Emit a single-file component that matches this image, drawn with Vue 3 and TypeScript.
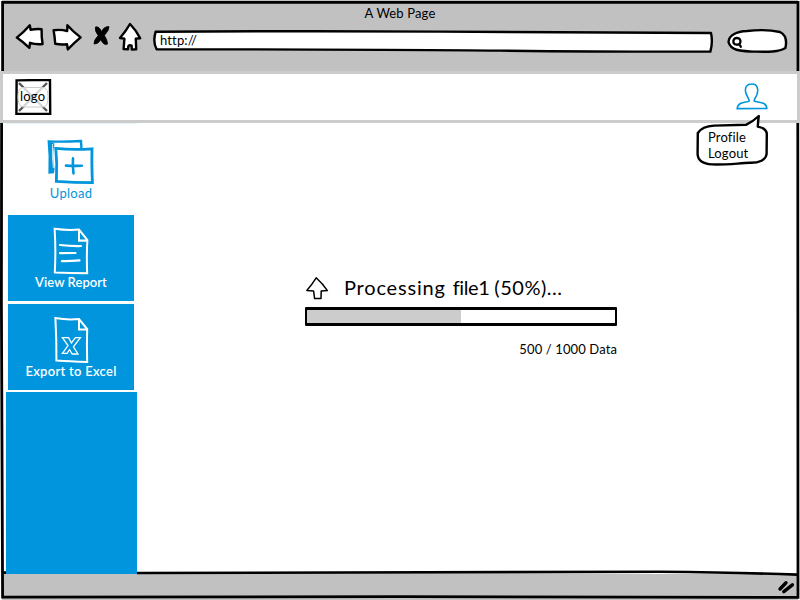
<script setup lang="ts">
interface NavItem {
  id: 'upload' | 'report' | 'excel'
  label: string
  active: boolean
}

const navItems: NavItem[] = [
  { id: 'upload', label: 'Upload', active: true },
  { id: 'report', label: 'View Report', active: false },
  { id: 'excel', label: 'Export to Excel', active: false },
]

const done = 500
const total = 1000
const percent = (done / total) * 100
</script>

<template>
  <div class="window">
    <header class="chrome">
      <div class="title"><span>A Web Page</span></div>
      <div class="toolbar">
        <svg class="ink tool-back" viewBox="14 22 31 30" width="31" height="30">
          <path d="M16.8 37.6 Q24 32 29.8 25.3 L30.6 29.8 Q37 28.6 41.6 29.3 Q41.4 37 42.6 44 Q36 44.8 30 42.8 L29.4 47.8 Q23 42 16.8 37.6Z" />
        </svg>
        <svg class="ink tool-forward" viewBox="51 22 32 30" width="32" height="30">
          <path d="M53.6 30.2 Q61 29.2 67.2 31 L67.4 25.2 Q73 31.5 80.6 37.4 Q74 43 67.8 49.4 L67 44.2 Q61 44.8 55.2 43.8 Q54.8 37 53.6 30.2Z" />
        </svg>
        <svg class="tool-stop" viewBox="92 24 20 24" width="20" height="24">
          <path d="M95.4 27 Q99 26 101.6 31.6 Q104 26.4 109 26.6 Q109.4 30 104.4 35.4 Q107.4 40 107.6 44 Q104 46 100.8 39.8 Q97.4 44.8 94 44 Q93.6 40.4 98.2 35.6 Q94.6 31 95.4 27Z" fill="#000" stroke="#000" stroke-width=".8" stroke-linejoin="round" />
        </svg>
        <svg class="ink tool-home" viewBox="117 21 26 31" width="26" height="31">
          <path d="M130 24 Q136 30 140.2 38.2 L135.8 38.6 L136.2 49.2 L131.8 49.6 L131.6 45.6 Q129.6 44.6 128.4 46 L128 49.4 L123.6 49 L124.4 38.6 L120 38 Q126 31 130 24Z" />
        </svg>
        <div class="address">
          <svg class="ink" viewBox="152 29 562 24" width="562" height="24">
            <path d="M155.6 31.8 Q300 30.7 440 31.6 T711 33 Q713 42 710.4 51.6 Q600 51.8 500 50.6 T156.6 49.2 Q152.6 42 155.6 31.8Z" />
          </svg>
          <span>http://</span>
        </div>
        <svg class="ink tool-search" viewBox="726 27 63 28" width="63" height="28">
          <path d="M728.5 42 C729 35 737 31.5 747 31 C759 29.6 771 30 780 32 C786 35 787 41 785.4 48 C778 52.6 765 51.8 753 51.6 C743 51 731 51.5 728.5 42Z" />
          <path class="fine" d="M736.4 38 C740 37.8 741 40 740.2 43 C739 45.4 734.6 45.2 733.6 43 C732.8 40 734.4 38.2 736.4 38 M739.4 44 L740.8 46.8" />
        </svg>
      </div>
    </header>

    <div class="app-bar">
      <div class="logo">
        <svg viewBox="15 79 37 36" width="37" height="36">
          <path d="M16.6 80.4 L50 79.9 L50.2 113.8 L16.4 114Z" fill="#fff" stroke="#000" stroke-width="2.4" />
          <path d="M19 83 L47 111 M47 83 L19 111" stroke="#555" stroke-width="2.4" />
          <path d="M22 87.5 H44 Q48 89 48 97 Q48 106 44 107 H23 Q18 106 18 97 Q18 89 22 87.5Z" fill="#fff" fill-opacity=".75" stroke="#ccc" />
        </svg>
        <span>logo</span>
      </div>
      <svg class="user" viewBox="735 81 34 30" width="34" height="30">
        <path d="M751.5 84 C758 83.5 758.6 90 756.8 95 C755.5 98 754 99 754.2 101 C758 102.6 766.6 101.5 766.8 108.4 L737.2 108.6 C738 101 747 102.8 749.2 101 C749 98 746.4 96 745.6 92 C744.8 87 747 84 751.5 84Z" fill="#fff" stroke="#0095dc" stroke-width="1.6" />
      </svg>
    </div>

    <div class="body">
      <nav class="sidebar">
        <div v-for="item in navItems" :key="item.id" class="nav-item" :class="{ active: item.active }">
          <svg v-if="item.id === 'upload'" viewBox="46 138 50 48" width="50" height="48">
            <path d="M54 172 L49.6 172.4 Q50.4 156 48.8 141.4 Q64 142 81 141 L81.4 148" fill="none" stroke="#0095dc" stroke-width="2.4" />
            <path d="M50 142 L54.6 143.4 Q51.6 156 54.6 169 L54 173 L49.6 172Z" fill="#0095dc" />
            <path d="M52.6 144 Q51.8 157 53.4 168 M54 143.8 H78" fill="none" stroke="#fff" stroke-width=".8" />
            <path d="M55.8 148.4 Q73 150 92 148.8 Q91.6 164 92.4 182.6 Q74 182.6 56.4 181.4 Q57.3 164 55.8 148.4Z" fill="#fff" stroke="#0095dc" stroke-width="2.8" />
            <path d="M73 158.4 Q72.5 166 73.5 173.4 M66 165.6 Q74 166 81.8 165.8" fill="none" stroke="#0095dc" stroke-width="2.6" stroke-linecap="round" />
          </svg>
          <svg v-else-if="item.id === 'report'" class="paper" viewBox="46 227 50 48" width="50" height="48">
            <path d="M54.6 228.8 Q67 230.6 79 229.6 L87.4 240 Q86.4 256 87.2 273.2 Q70 273 54.8 272.4 Q56 250 54.6 228.8Z M79 229.8 L79 240.6 L87 240.4" />
            <path d="M60 245 Q70 246.2 81 246 M60 253.2 L75.5 253 M62 261.2 Q71 261.3 79.5 260.4" stroke-width="2.2" stroke-linecap="round" />
          </svg>
          <svg v-else class="paper" viewBox="46 316 50 48" width="50" height="48">
            <path d="M55.4 318 Q67 320.2 79 319 L87.2 329 Q86.6 345 87.2 362 Q70 361.6 56.4 360.6 Q56.6 340 55.4 318Z M79 319 L79 329.4 L87.4 329.4" />
            <path d="M62.4 337.6 H68.6 L71.4 343 L75.4 337.6 H80.4 L73.4 346.8 L78 354 H72.2 L69.6 349.6 L67 353.4 H62.4 L68 345.6Z" stroke-width="1.3" />
          </svg>
          <span :class="'label-' + item.id">{{ item.label }}</span>
        </div>
        <div class="sidebar-fill"></div>
      </nav>

      <main class="content">
        <section class="progress">
          <div class="heading">
            <svg viewBox="305 276 24 24" width="24" height="24">
              <path d="M316.2 277.8 Q323 284 327.4 290.6 L321.2 291 L321 298.4 L314.6 298.6 L313.6 291 L306.8 290.4 Q312 284.5 316.2 277.8Z" fill="#fff" stroke="#000" stroke-width="1.5" stroke-linejoin="round" />
            </svg>
            <h1><span class="verb">Processing</span><span class="file">file1</span><span>({{ percent }}%)...</span></h1>
          </div>
          <div class="bar"><div class="bar-fill" :style="{ width: percent + '%' }"></div></div>
          <p class="count">{{ done }} / {{ total }} Data</p>
        </section>
      </main>
    </div>

    <footer class="status"></footer>

    <svg class="frame" viewBox="0 0 800 600" width="800" height="600">
      <path d="M2.6 71 V2.3 H798 V71" stroke-width="2.8" />
      <path d="M1.6 123 L1.4 300 L2.6 597.2 L400 596.6 L798 597.4 L797.8 123" stroke-width="2.8" />
      <path d="M3 572.6 H6 M137 573 Q400 571.4 660 571.8 Q740 572.6 797 574.6" stroke-width="2.6" />
      <path d="M780 589 L786 582.8 M783.8 591.6 L792.4 584.8" stroke-width="3.4" stroke-linecap="round" />
    </svg>

    <div class="menu">
      <svg class="ink" viewBox="695 113 74 54" width="74" height="54">
        <path d="M697.8 133 C701 128 707 126 714 125.6 L746 124.8 Q753 121.5 758.8 116 Q758 121 757.8 126.6 C763 127.6 766.6 130 766.8 134 L766.6 154 C766 160 759 163 750 162.8 C737 163.4 724 165 712 164.4 C703 163.8 697.8 160 697.6 154Z" />
      </svg>
      <ul>
        <li>Profile</li>
        <li>Logout</li>
      </ul>
    </div>
  </div>
</template>

<style>
body {
  margin: 0;
  background: #fff;
}
</style>

<style scoped>
.window {
  position: relative;
  box-sizing: border-box;
  width: 800px;
  height: 600px;
  display: flex;
  flex-direction: column;
  overflow: hidden;
  background: #fff;
  color: #000;
  font: 13px/16px Lato, 'Open Sans', sans-serif;
}
svg {
  display: block;
  flex: none;
}
span, li, h1, p {
  white-space: nowrap;
}
.ink {
  fill: #fff;
  stroke: #000;
  stroke-width: 2.4;
  stroke-linejoin: round;
  stroke-linecap: round;
}
.fine {
  stroke-width: 2.3;
}
.chrome {
  box-sizing: border-box;
  height: 71px;
  flex: none;
  margin: 0 2px;
  padding-top: 5px;
  background: #c1c1c1;
}
.title {
  display: flex;
  justify-content: center;
  height: 16px;
  letter-spacing: 0.15px;
}
.toolbar {
  display: flex;
  align-items: flex-start;
  padding-left: 12px;
}
.tool-back, .tool-forward { margin-top: 1px; }
.tool-forward { margin-left: 6px; }
.tool-stop { margin: 3px 0 0 9px; }
.tool-home { margin-left: 5px; }
.address {
  display: grid;
  margin: 8px 0 0 9px;
  letter-spacing: 0.15px;
}
.address > * {
  grid-area: 1 / 1;
}
.address span {
  padding: 3px 0 0 8px;
}
.tool-search { margin: 6px 0 0 12px; }
.app-bar {
  box-sizing: border-box;
  height: 52px;
  flex: none;
  display: flex;
  justify-content: space-between;
  border: 3px solid #ccc;
  padding: 5px 28px 0 12px;
  background: #fff;
}
.logo {
  display: grid;
  width: 37px;
}
.logo > * {
  grid-area: 1 / 1;
}
.logo span {
  padding: 9px 0 0 5px;
  letter-spacing: 0.2px;
}
.user {
  margin-top: 2px;
}
.body {
  flex: 1;
  min-height: 0;
  display: flex;
  padding-left: 6px;
}
.sidebar {
  width: 131px;
  display: flex;
  flex-direction: column;
  border-top: 1px solid #e6f3fa;
  box-sizing: border-box;
}
.nav-item {
  box-sizing: border-box;
  width: 126px;
  height: 86px;
  flex: none;
  margin: 0 0 3px 2px;
  padding-top: 12px;
  display: flex;
  flex-direction: column;
  align-items: center;
  background: #0095dc;
  color: #fff;
}
.nav-item span {
  margin-top: -1px;
  font-weight: 600;
}
.nav-item.active {
  height: 88px;
  padding-top: 14px;
  background: #fff;
  color: #0095dc;
}
.nav-item.active span {
  font-weight: 400;
}
.label-upload { letter-spacing: 0.25px; }
.label-report { letter-spacing: 0.05px; }
.label-excel { letter-spacing: 0.28px; }
.paper {
  fill: none;
  stroke: #fff;
  stroke-width: 2;
}
.sidebar-fill {
  flex: 1;
  margin-top: -1px;
  background: #0095dc;
}
.content {
  flex: 1;
  padding: 153px 180px 0 168px;
}
.progress {
  width: 312px;
}
.heading {
  display: flex;
  align-items: center;
  height: 24px;
}
h1 {
  display: flex;
  margin: -2px 0 0 15px;
  font-size: 20px;
  line-height: 24px;
  font-weight: 400;
  letter-spacing: 0.5px;
}
.verb {
  margin-right: 7px;
  letter-spacing: 0.8px;
}
.file {
  margin-right: 5px;
  letter-spacing: -0.4px;
}
.bar {
  box-sizing: border-box;
  height: 19px;
  margin-top: 7px;
  border: solid #000;
  border-width: 3px 2px;
  border-radius: 1px;
}
.bar-fill {
  height: 100%;
  background: #ccc;
}
.count {
  margin: 15px 0 0;
  text-align: right;
  letter-spacing: 0.12px;
}
.status {
  height: 26px;
  flex: none;
  margin: 0 2px;
  background: #c1c1c1;
}
.frame {
  position: absolute;
  inset: 0;
  fill: none;
  stroke: #000;
  pointer-events: none;
}
.menu {
  position: absolute;
  left: 695px;
  top: 113px;
  display: grid;
}
.menu > * {
  grid-area: 1 / 1;
}
.menu ul {
  list-style: none;
  margin: 0;
  padding: 16px 0 0 13px;
  letter-spacing: 0.15px;
}
</style>
